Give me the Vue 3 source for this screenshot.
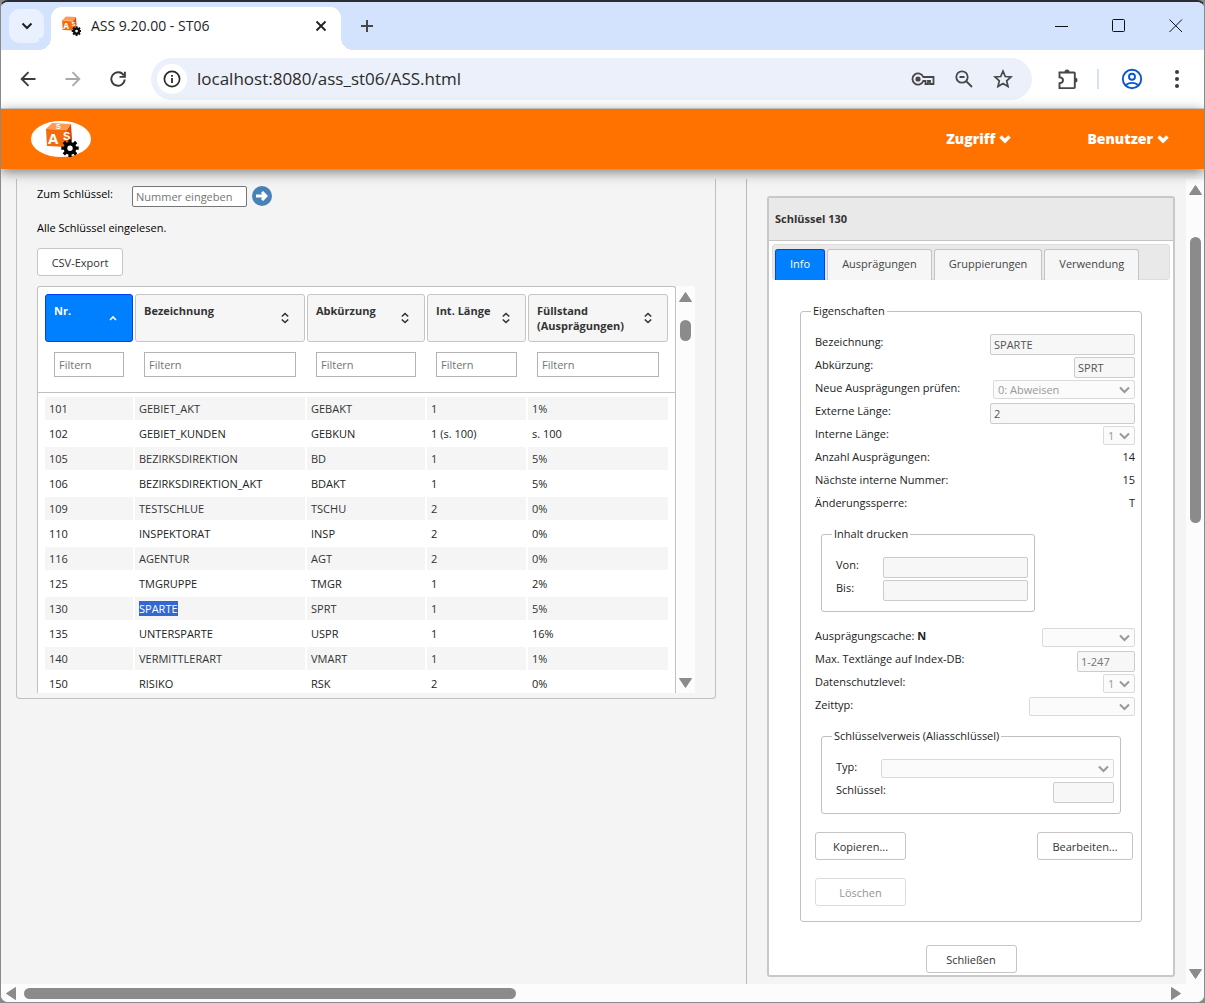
<script setup>
import { ref } from 'vue'

const columns = [
  { key: 'nr', label: 'Nr.', width: 88, sorted: true },
  { key: 'name', label: 'Bezeichnung', width: 170 },
  { key: 'abbr', label: 'Abkürzung', width: 118 },
  { key: 'len', label: 'Int. Länge', width: 99 },
  { key: 'fill', label: 'Füllstand (Ausprägungen)', width: 140 },
]

const rows = [
  ['101', 'GEBIET_AKT', 'GEBAKT', '1', '1%'],
  ['102', 'GEBIET_KUNDEN', 'GEBKUN', '1 (s. 100)', 's. 100'],
  ['105', 'BEZIRKSDIREKTION', 'BD', '1', '5%'],
  ['106', 'BEZIRKSDIREKTION_AKT', 'BDAKT', '1', '5%'],
  ['109', 'TESTSCHLUE', 'TSCHU', '2', '0%'],
  ['110', 'INSPEKTORAT', 'INSP', '2', '0%'],
  ['116', 'AGENTUR', 'AGT', '2', '0%'],
  ['125', 'TMGRUPPE', 'TMGR', '1', '2%'],
  ['130', 'SPARTE', 'SPRT', '1', '5%'],
  ['135', 'UNTERSPARTE', 'USPR', '1', '16%'],
  ['140', 'VERMITTLERART', 'VMART', '1', '1%'],
  ['150', 'RISIKO', 'RSK', '2', '0%'],
]

const tabs = ['Info', 'Ausprägungen', 'Gruppierungen', 'Verwendung']
const activeTab = ref('Info')
const selected = ref('SPARTE')
</script>

<template>
  <div class="window">
    <header class="tabstrip">
      <button class="tabsearch" aria-label="Tabs durchsuchen">
        <svg width="12" height="8" viewBox="0 0 12 8"><path d="M1.500 1.500 6 6l4.500-4.500" fill="none" stroke="#1f1f1f" stroke-width="2" /></svg>
      </button>
      <div class="browsertab">
        <svg class="favicon" width="20" height="20" viewBox="0 0 36 36">
          <path d="M2 8 9 1l18 1-4 7z" fill="#ff9a55" /><path d="M2 8l20 2v16L3 25z" fill="#f26a0a" /><path d="m22 10 5-8 1 14-6 10z" fill="#d9480a" />
          <text x="4" y="23" class="cube-a">A</text><text x="19" y="18" class="cube-s">S</text>
          <path d="M28 18.500V36M19.300 27.200h17.400M21.800 21l12.400 12.400m0-12.400L21.800 33.400" stroke="#111" stroke-width="3.600" />
          <circle cx="28" cy="27.200" r="4.500" fill="#fff" stroke="#111" stroke-width="4" />
        </svg>
        <span class="tabtitle">ASS 9.20.00 - ST06</span>
        <button class="plain" aria-label="Tab schließen">
          <svg width="12" height="12" viewBox="0 0 12 12"><path d="m1.500 1.500 9 9m0-9-9 9" stroke="#1f1f1f" stroke-width="1.800" /></svg>
        </button>
      </div>
      <button class="plain newtab" aria-label="Neuer Tab">
        <svg width="14" height="14" viewBox="0 0 14 14"><path d="M7 1v12M1 7h12" stroke="#474747" stroke-width="2" /></svg>
      </button>
      <div class="wincontrols">
        <button class="plain" aria-label="Minimieren"><svg width="14" height="14" viewBox="0 0 14 14"><path d="M0 7.500h13" stroke="#111" /></svg></button>
        <button class="plain" aria-label="Maximieren"><svg width="14" height="14" viewBox="0 0 14 14"><rect x=".5" y=".5" width="12" height="12" rx="1" fill="none" stroke="#111" /></svg></button>
        <button class="plain" aria-label="Schließen"><svg width="14" height="14" viewBox="0 0 14 14"><path d="m.5.5 12.500 12.500m0-12.500L.5 13" stroke="#111" /></svg></button>
      </div>
    </header>

    <div class="toolbar">
      <button class="plain" aria-label="Zurück"><svg width="16" height="16" viewBox="0 0 16 16"><path d="M15.500 8H2M8.500 1.200 1.700 8l6.800 6.800" fill="none" stroke="#3c3c3c" stroke-width="1.900" /></svg></button>
      <button class="plain" aria-label="Vorwärts"><svg width="16" height="16" viewBox="0 0 16 16"><path d="M.5 8H14M7.500 1.200 14.300 8l-6.800 6.800" fill="none" stroke="#a9a9a9" stroke-width="1.900" /></svg></button>
      <button class="plain" aria-label="Neu laden"><svg width="16" height="16" viewBox="0 0 16 16"><path d="M13.800 4.600A6.700 6.700 0 1 0 14.700 8.500M14.900.7v5.200H9.500" fill="none" stroke="#3c3c3c" stroke-width="1.900" /></svg></button>
      <div class="omnibox">
        <button class="siteinfo" aria-label="Website-Informationen">
          <svg width="18" height="18" viewBox="0 0 18 18"><circle cx="9" cy="9" r="7.600" fill="none" stroke="#2b2b2b" stroke-width="1.700" /><path d="M9 8v5M9 5v1.800" stroke="#2b2b2b" stroke-width="1.800" /></svg>
        </button>
        <input class="url" aria-label="Adresse" value="localhost:8080/ass_st06/ASS.html" />
        <button class="plain" aria-label="Passwörter"><svg width="24" height="14" viewBox="0 0 24 14"><path d="M12.300 5H22.500v7h-3.500V9h-2v3h-2.500V9h-2.200A5.600 5.600 0 1 1 12.300 5z" fill="none" stroke="#474747" stroke-width="1.800" /><circle cx="7" cy="7" r="2.600" fill="#474747" /></svg></button>
        <button class="plain" aria-label="Zoom"><svg width="18" height="18" viewBox="0 0 18 18"><circle cx="7" cy="7" r="5.700" fill="none" stroke="#474747" stroke-width="1.800" /><path d="m11 11 6 6M4.500 7h5" stroke="#474747" stroke-width="1.800" /></svg></button>
        <button class="plain" aria-label="Lesezeichen"><svg width="20" height="20" viewBox="0 0 20 20"><path d="m10 2.200 2.300 5.300 5.700.5-4.300 3.800 1.300 5.700-5-3-5 3 1.300-5.700L2 8l5.700-.5z" fill="none" stroke="#474747" stroke-width="1.700" /></svg></button>
      </div>
      <button class="plain ext" aria-label="Erweiterungen"><svg width="22" height="22" viewBox="0 0 22 22"><path d="M2.500 4.500h14.500q.8 0 .8.800v14q0 .8-.8.800H2.500v-4.800q3.500-.3 3.500-3t-3.500-3z" fill="none" stroke="#474747" stroke-width="1.900" /><path d="M7.500 4a2.500 2.500 0 0 1 5 0zM18 9.500a2.500 2.500 0 0 1 0 5z" fill="#474747" /></svg></button>
      <span class="divider"></span>
      <button class="plain profile" aria-label="Profil"><svg width="22" height="22" viewBox="0 0 22 22" fill="none" stroke="#0b57d0" stroke-width="1.900"><circle cx="11" cy="11" r="9.200" /><circle cx="11" cy="8.800" r="3" /><path d="M4.500 17.200q6.500-4.600 13 0" /></svg></button>
      <button class="plain" aria-label="Menü"><svg width="6" height="20" viewBox="0 0 6 20" fill="#3c3c3c"><circle cx="3" cy="3" r="2" /><circle cx="3" cy="10" r="2" /><circle cx="3" cy="17" r="2" /></svg></button>
    </div>

    <nav class="appbar">
      <a href="#" class="logo" aria-label="Startseite">
        <svg width="36" height="36" viewBox="0 0 36 36">
          <path d="M3 8 9 2l19 1-4 6z" fill="#ff9a55" /><path d="M3 8l21 1v17L4 25z" fill="#f26a0a" /><path d="m24 9 4-6 1 15-5 8z" fill="#d9480a" />
          <text x="5" y="23" class="cube-a">A</text><text x="20" y="19" class="cube-s">S</text><text x="13" y="8" class="cube-top">S</text>
          <path d="M27 18.500V36M18.300 27.200h17.400M20.800 21l12.400 12.400m0-12.400L20.800 33.400" stroke="#000" stroke-width="3.200" />
          <circle cx="27" cy="27.200" r="4.500" fill="#fff" stroke="#000" stroke-width="3.600" />
        </svg>
      </a>
      <a v-for="m in ['Zugriff', 'Benutzer']" :key="m" href="#" class="menu">{{ m }}
        <svg width="12" height="10" viewBox="0 0 12 10"><path d="m1.500 2.500 4.500 4.500 4.500-4.500" fill="none" stroke="#fff" stroke-width="3.400" /></svg>
      </a>
    </nav>

    <div class="viewport">
      <main class="page">
        <section class="left">
          <div class="listpanel">
            <form class="goto" @submit.prevent>
              <label for="goto">Zum Schlüssel:</label>
              <input id="goto" placeholder="Nummer eingeben" />
              <button class="go" aria-label="Gehe zu"><svg width="12" height="10" viewBox="0 0 12 10"><path d="M0 5h9M6 1l4 4-4 4" fill="none" stroke="#fff" stroke-width="3" /></svg></button>
            </form>
            <p class="status">Alle Schlüssel eingelesen.</p>
            <button class="btn csv">CSV-Export</button>
            <div class="listing">
              <div class="tablebox">
                <div class="headbox">
                  <table>
                    <colgroup><col v-for="c in columns" :key="c.key" :style="{ width: c.width + 'px' }" /></colgroup>
                    <thead>
                      <tr>
                        <th v-for="c in columns" :key="c.key" :class="{ sorted: c.sorted }">
                          <div class="th">
                            <span>{{ c.label }}</span>
                            <svg v-if="c.sorted" width="8" height="12" viewBox="0 0 8 12"><path d="m1 8 3-3 3 3" fill="none" stroke="#fff" stroke-width="1.600" /></svg>
                            <svg v-else width="8" height="12" viewBox="0 0 8 12"><path d="m.8 4.500 3.200-3 3.200 3M.8 7.500l3.200 3 3.200-3" fill="none" stroke="#333" stroke-width="1.600" /></svg>
                          </div>
                        </th>
                      </tr>
                      <tr>
                        <td v-for="c in columns" :key="c.key" class="filter"><input :aria-label="c.label + ' filtern'" placeholder="Filtern" /></td>
                      </tr>
                    </thead>
                  </table>
                </div>
                <div class="bodybox">
                  <table>
                    <colgroup><col v-for="c in columns" :key="c.key" :style="{ width: c.width + 'px' }" /></colgroup>
                    <tbody>
                      <tr v-for="r in rows" :key="r[0]">
                        <td v-for="(v, i) in r" :key="i"><mark v-if="v === selected">{{ v }}</mark><template v-else>{{ v }}</template></td>
                      </tr>
                    </tbody>
                  </table>
                </div>
              </div>
              <div class="vscroll inner">
                <svg width="13" height="10" viewBox="0 0 13 10"><path d="M6.500.5 12.500 9.500H.5z" /></svg>
                <span class="thumb short"></span>
                <svg class="down" width="13" height="10" viewBox="0 0 13 10"><path d="M6.500 9.500 12.500.5H.5z" /></svg>
              </div>
            </div>
          </div>
        </section>

        <section class="right">
          <div class="detail">
            <h2>Schlüssel 130</h2>
            <div class="detailbody">
              <div class="tabs" role="tablist">
                <button v-for="t in tabs" :key="t" role="tab" :class="{ active: t === activeTab }" @click="activeTab = t">{{ t }}</button>
              </div>
              <fieldset class="props">
                <legend>Eigenschaften</legend>
                <div class="row"><label for="bez">Bezeichnung:</label><input id="bez" class="w145" value="SPARTE" readonly /></div>
                <div class="row"><label for="abk">Abkürzung:</label><input id="abk" class="w61" value="SPRT" readonly /></div>
                <div class="row"><label for="neu">Neue Ausprägungen prüfen:</label><select id="neu" class="w142" disabled><option>0: Abweisen</option></select></div>
                <div class="row"><label for="ext">Externe Länge:</label><input id="ext" class="w145" value="2" readonly /></div>
                <div class="row"><label for="int">Interne Länge:</label><select id="int" class="w32" disabled><option>1</option></select></div>
                <div class="row"><span>Anzahl Ausprägungen:</span><span>14</span></div>
                <div class="row"><span>Nächste interne Nummer:</span><span>15</span></div>
                <div class="row"><span>Änderungssperre:</span><span>T</span></div>
                <fieldset class="sub print">
                  <legend>Inhalt drucken</legend>
                  <div class="row"><label for="von">Von:</label><input id="von" class="w145" readonly /></div>
                  <div class="row"><label for="bis">Bis:</label><input id="bis" class="w145" readonly /></div>
                </fieldset>
                <div class="row"><label for="cache">Ausprägungscache: <b>N</b></label><select id="cache" class="w93" disabled><option></option></select></div>
                <div class="row"><label for="max">Max. Textlänge auf Index-DB:</label><input id="max" class="w58" placeholder="1-247" readonly /></div>
                <div class="row"><label for="dsl">Datenschutzlevel:</label><select id="dsl" class="w32" disabled><option>1</option></select></div>
                <div class="row"><label for="zeit">Zeittyp:</label><select id="zeit" class="w106" disabled><option></option></select></div>
                <fieldset class="sub alias">
                  <legend>Schlüsselverweis (Aliasschlüssel)</legend>
                  <div class="row"><label for="typ">Typ:</label><select id="typ" class="w233" disabled><option></option></select></div>
                  <div class="row"><label for="key">Schlüssel:</label><input id="key" class="w61" readonly /></div>
                </fieldset>
                <div class="actions">
                  <button class="btn wide">Kopieren...</button>
                  <button class="btn edit">Bearbeiten...</button>
                </div>
                <button class="btn wide" disabled>Löschen</button>
              </fieldset>
              <button class="btn wide close">Schließen</button>
            </div>
          </div>
        </section>
      </main>
      <div class="vscroll">
        <svg width="13" height="10" viewBox="0 0 13 10"><path d="M6.500.5 12.500 9.500H.5z" /></svg>
        <span class="thumb long"></span>
        <svg class="down" width="13" height="10" viewBox="0 0 13 10"><path d="M6.500 9.500 12.500.5H.5z" /></svg>
      </div>
    </div>

    <div class="hscroll">
      <svg width="10" height="13" viewBox="0 0 10 13"><path d="M.5 6.500 9.500.5v12z" /></svg>
      <span class="hthumb"></span>
      <svg width="10" height="13" viewBox="0 0 10 13"><path d="M9.500 6.500.5.5v12z" /></svg>
    </div>
  </div>
</template>

<style>
body { margin: 0; background: #8a8a8a; }
</style>

<style scoped>
* { box-sizing: border-box; }
.window {
  height: 100vh;
  display: flex;
  flex-direction: column;
  overflow: hidden;
  background: #f4f4f4;
  border: 1px solid #8a8a8a;
  border-top: 2px solid #2b2b33;
  border-radius: 8px;
  font: 11px/18px "Open Sans", sans-serif;
  color: #222;
}
button, input, select { font: inherit; color: inherit; margin: 0; }
svg { display: block; flex: none; }
.plain { background: none; border: 0; padding: 0; display: block; }

.tabstrip { display: flex; height: 48px; flex: none; background: #d3e3fd; padding-left: 8px; align-items: center; }
.tabsearch { width: 35px; height: 34px; border: 0; border-radius: 11px; background: #e9f1fe; display: grid; place-items: center; padding: 0; }
.browsertab {
  position: relative; align-self: flex-end; height: 43px; width: 290px; margin-left: 7px; padding: 0 14px 6px 10px;
  background: #fff; border-radius: 11px 11px 0 0; display: flex; align-items: center;
}
.browsertab::before, .browsertab::after { content: ""; position: absolute; bottom: 0; width: 12px; height: 12px; }
.browsertab::before { right: 100%; background: radial-gradient(circle at 0 0, #d3e3fd 12px, #fff 12px); }
.browsertab::after { left: 100%; background: radial-gradient(circle at 100% 0, #d3e3fd 12px, #fff 12px); }
.tabtitle { flex: 1; margin-left: 10px; font-size: 14px; color: #1f1f1f; }
.newtab { margin-left: 19px; }
.wincontrols { display: flex; gap: 43px; margin-left: auto; padding-right: 21px; }
.cube-a { font: bold 15px "Open Sans", sans-serif; fill: #fff; }
.cube-s { font: bold 11px "Liberation Sans", sans-serif; fill: #fff; }
.cube-top { font: bold 7px "Liberation Sans", sans-serif; fill: #fff; }

.toolbar { display: flex; flex: none; height: 59px; align-items: center; background: #fff; border-bottom: 1px solid #d9dcdc; padding: 0 24px 0 19px; }
.toolbar > .plain + .plain { margin-left: 29px; }
.omnibox { flex: 1; display: flex; align-items: center; gap: 20px; height: 42px; margin: 0 25px; border-radius: 21px; background: #ebf0fa; padding: 0 19px 0 6px; }
.siteinfo { width: 30px; height: 30px; border-radius: 15px; border: 0; background: #fff; display: grid; place-items: center; padding: 0; }
.url { flex: 1; min-width: 0; border: 0; padding: 0; background: none; font-size: 17px; line-height: 24px; color: #2b2b2b; margin-left: -10px; }
.divider { width: 2px; height: 20px; background: #d3e3fd; margin: 0 22px 0 18px; }
.toolbar > .profile + .plain { margin-left: 31px; }

.appbar {
  position: relative; z-index: 2; display: flex; flex: none; align-items: center; height: 60px; gap: 76px;
  background: #ff7200; padding: 0 35px 0 30px; box-shadow: 0 3px 12px rgba(0, 0, 0, .5);
}
.logo { display: grid; place-items: center; width: 60px; height: 36px; border-radius: 50%; background: #fff; margin-right: auto; }
.menu { display: flex; align-items: center; gap: 4px; color: #fff; font-size: 14px; font-weight: 800; text-decoration: none; }

.viewport { flex: 1; min-height: 0; display: flex; padding-top: 10px; }
.page { flex: 1; min-width: 0; display: flex; }
.left { flex: 746 1 0; border-right: 1px solid #b9b9b9; padding: 0 30px 0 15px; }
.listpanel { height: 520px; border: 1px solid #c0c0c0; border-top: 0; border-radius: 0 0 4px 4px; padding: 7px 20px 5px; display: flex; flex-direction: column; align-items: flex-start; color: #000; }
.goto { display: flex; align-items: flex-start; }
.goto label { width: 95px; line-height: 16px; }
.goto input { width: 115px; height: 21px; border: 1px solid #767676; border-radius: 2px; padding: 0 3px; background: #fff; }
.go { width: 20px; height: 20px; margin-left: 5px; padding: 0; border: 0; border-radius: 50%; background: #4682b8; display: grid; place-items: center; }
input::placeholder { color: #757575; opacity: 1; }
.status { margin: 12px 0 11px; }
.btn { height: 28px; padding: 1px 0 0; background: #fff; border: 1px solid #c5c5c5; border-radius: 3px; color: #333; white-space: nowrap; }
.btn:disabled { color: #949494; border-color: #dcdcdc; }
.csv { width: 86px; }
.listing { flex: 1; min-height: 0; align-self: stretch; display: flex; margin-top: 10px; }
.tablebox { width: 639px; overflow: hidden; background: #fff; border: 1px solid #c0c0c0; border-bottom: 0; border-radius: 3px 3px 0 0; }
.headbox { padding: 5px 5px 5px; border-bottom: 1px solid #c0c0c0; }
.bodybox { padding: 2px 5px; }
table { table-layout: fixed; width: 627px; border-collapse: separate; border-spacing: 2px; }
th { height: 48px; padding: 8px 15px 0 8px; background: #f6f6f6; border: 1px solid #c5c5c5; border-radius: 3px; text-align: left; vertical-align: top; line-height: 15px; color: #333; }
th.sorted { background: #007fff; border-color: #003eff; color: #fff; }
.th { display: flex; justify-content: space-between; align-items: flex-start; }
.th svg { margin-top: 9px; }
.filter { height: 41px; padding: 0 9px; }
.filter input { width: 100%; height: 25px; border: 1px solid #b3b3b3; padding: 0 4px; background: #fff; display: block; }
tbody td { height: 23px; padding: 0 4px; line-height: 17px; white-space: nowrap; color: #222; }
tbody tr:nth-child(odd) td { background: #f5f5f5; color: #333; }
mark { background: #3367d1; color: #fff; }

.vscroll { width: 18px; flex: none; background: #fcfcfc; display: flex; flex-direction: column; align-items: center; padding: 6px 0 5px; }
.vscroll svg, .hscroll svg { fill: #8b8b8b; stroke: #8b8b8b; stroke-linejoin: round; }
.vscroll.inner { width: 19px; padding-bottom: 5px; }
.down { margin-top: auto; }
.thumb { width: 11px; border-radius: 6px; background: #8b8b8b; }
.short { height: 21px; margin-top: 18px; }
.long { height: 286px; margin-top: 42px; }
.hscroll { height: 18px; flex: none; display: flex; align-items: center; background: #fcfcfc; padding: 0 23px 0 5px; gap: 8px; }
.hthumb { width: 492px; height: 11px; border-radius: 6px; background: #8b8b8b; margin-right: auto; }

.right { flex: 439 1 0; padding: 17px 11px 7px 20px; }
.detail { border: 2px solid #c8c8c8; border-radius: 3px; background: #fff; height: 100%; display: flex; flex-direction: column; }
h2 { margin: 0; height: 43px; flex: none; padding: 0 6px; background: #e9e9e9; border-bottom: 1px solid #c5c5c5; font-size: 11px; line-height: 42px; color: #333; }
.detailbody { flex: 1; display: flex; flex-direction: column; padding: 3px 3px 2px; }
.tabs { display: flex; gap: 2px; height: 36px; flex: none; padding: 4px 2px 0; background: #e9e9e9; border: 1px solid #ddd; border-radius: 3px; }
.tabs button { height: 31px; padding: 0 14px 2px; background: #f6f6f6; border: 1px solid #c5c5c5; border-bottom: 0; border-radius: 3px 3px 0 0; color: #454545; }
.tabs button.active { background: #007fff; border-color: #003eff; color: #fff; }

fieldset { margin: 0; border: 1px solid #c0c0c0; border-radius: 3px; min-width: 0; }
legend { padding: 0 2px; margin-left: -4px; height: 18px; }
.props { margin: 22px 28px 0; padding: 13px 6px 15px 14px; }
.row { height: 23px; display: flex; justify-content: space-between; align-items: flex-start; }
.row input, .row select { margin-top: 1px; border: 1px solid #ccc; border-radius: 2px; background-color: #f7f7f7; color: #545454; flex: none; }
.row input { height: 21px; padding: 0 3px; }
.row select {
  height: 19px; padding: 0 4px; appearance: none; opacity: 1; color: #999; border-color: #dadada;
  background: #fbfbfb url("data:image/svg+xml,%3Csvg xmlns='http://www.w3.org/2000/svg' width='11' height='8'%3E%3Cpath d='M1 1.500l4.500 4.500L10 1.500' fill='none' stroke='%23999' stroke-width='2'/%3E%3C/svg%3E") no-repeat right 4px center;
}
.sub { margin: 8px 0 0 6px; padding: 13px 6px 9px 14px; }
.print { width: 214px; margin-bottom: 15px; }
.alias { width: 300px; margin-bottom: 18px; }
.actions { display: flex; justify-content: space-between; padding-right: 2px; margin-bottom: 18px; }
.wide { width: 91px; }
.edit { width: 96px; }
.close { align-self: center; margin-top: auto; }
.w145 { width: 145px; }
.w142 { width: 142px; }
.w61 { width: 61px; }
.w58 { width: 58px; }
.w32 { width: 32px; }
.w93 { width: 93px; }
.w106 { width: 106px; }
.w233 { width: 233px; }
</style>
